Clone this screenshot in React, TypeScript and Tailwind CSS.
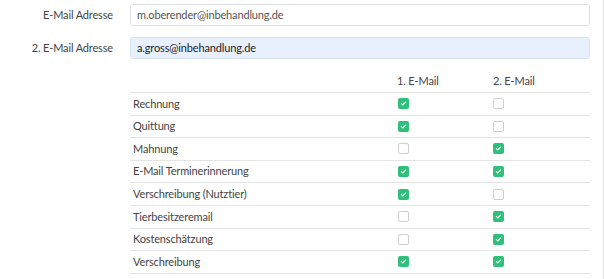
import React from 'react';

type Row = { label: string; first: boolean; second: boolean };

const rows: Row[] = [
  { label: 'Rechnung', first: true, second: false },
  { label: 'Quittung', first: true, second: false },
  { label: 'Mahnung', first: false, second: true },
  { label: 'E-Mail Terminerinnerung', first: true, second: true },
  { label: 'Verschreibung (Nutztier)', first: true, second: false },
  { label: 'Tierbesitzeremail', first: false, second: true },
  { label: 'Kostenschätzung', first: false, second: true },
  { label: 'Verschreibung', first: true, second: true },
];

const Check: React.FC<{ checked: boolean }> = ({ checked }) =>
  checked ? (
    <span className="w-[11px] h-[11px] rounded-[2px] bg-[#2fc07a] flex items-center justify-center">
      <svg viewBox="0 0 10 10" className="w-[7px] h-[7px]" fill="none" stroke="white" strokeWidth={1.8} strokeLinecap="round" strokeLinejoin="round">
        <path d="M2 5.2l2 1.8 4-4" />
      </svg>
    </span>
  ) : (
    <span className="block w-[11px] h-[11px] rounded-[2px] border border-[#cfcfcf] bg-white" />
  );

export default function App() {
  return (
    <div className="w-[604px] h-[279px] bg-white border-r border-[#e6e6e6] pr-[13px] text-[11px] text-[#444] tracking-[-0.15px]" style={{ fontFamily: 'Lato, "Open Sans", sans-serif' }}>
      <div className="flex items-center pt-[4px]">
        <label className="w-[113px] text-right">E-Mail Adresse</label>
        <div className="ml-[17px] flex-1 h-[22px] border border-[#dde1e6] rounded-[3px] bg-white flex items-center px-[6px] text-[#555]">
          m.oberender@inbehandlung.de
        </div>
      </div>
      <div className="flex items-center mt-[11px]">
        <label className="w-[113px] text-right">2. E-Mail Adresse</label>
        <div className="ml-[17px] flex-1 h-[22px] border border-[#d5e1f0] rounded-[3px] bg-[#e8f0fe] flex items-center px-[6px] text-[#222]">
          a.gross@inbehandlung.de
        </div>
      </div>
      <div className="ml-[130px] mt-[12px]">
        <div className="flex items-center h-[21px]">
          <div className="w-[267px]" />
          <div className="w-[96px]">1. E-Mail</div>
          <div className="flex-1">2. E-Mail</div>
        </div>
        {rows.map((r) => (
          <div key={r.label} className="flex items-center h-[22.6px] border-t border-[#e4e4e4]">
            <div className="w-[267px] pl-[3px]">{r.label}</div>
            <div className="w-[96px] pl-[1px]"><Check checked={r.first} /></div>
            <div className="flex-1"><Check checked={r.second} /></div>
          </div>
        ))}
        <div className="border-t border-[#e4e4e4]" />
      </div>
    </div>
  );
}
